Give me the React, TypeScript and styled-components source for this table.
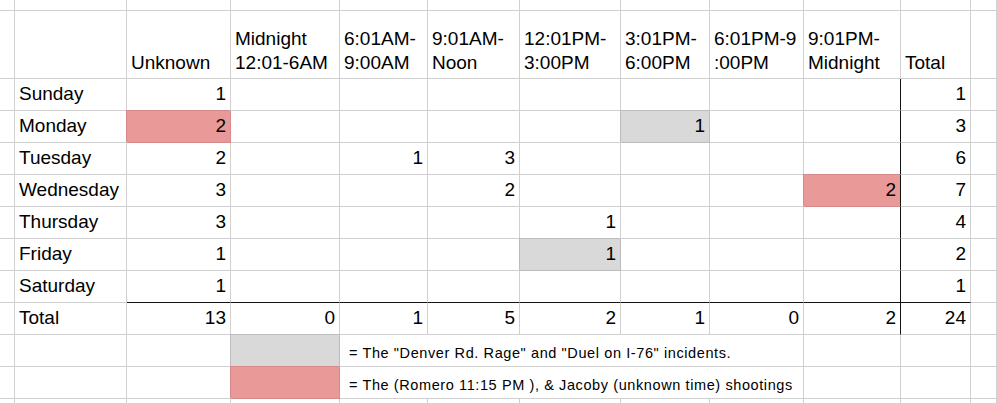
import React from 'react'
import styled, { createGlobalStyle, css } from 'styled-components'

type Fill = 'red' | 'gray'

interface DayRow {
	day: string
	values: (number | null)[]
	total: number
	fills?: Record<number, Fill>
}

const fills = {
	red: { bg: '#ea9999', edge: '#d48a8a' },
	gray: { bg: '#d9d9d9', edge: '#bcbcbc' },
}

const headers = [
	['Unknown'],
	['Midnight', '12:01-6AM'],
	['6:01AM-', '9:00AM'],
	['9:01AM-', 'Noon'],
	['12:01PM-', '3:00PM'],
	['3:01PM-', '6:00PM'],
	['6:01PM-9', ':00PM'],
	['9:01PM-', 'Midnight'],
	['Total'],
]

const rows: DayRow[] = [
	{ day: 'Sunday', values: [1, null, null, null, null, null, null, null], total: 1 },
	{ day: 'Monday', values: [2, null, null, null, null, 1, null, null], total: 3, fills: { 0: 'red', 5: 'gray' } },
	{ day: 'Tuesday', values: [2, null, 1, 3, null, null, null, null], total: 6 },
	{ day: 'Wednesday', values: [3, null, null, 2, null, null, null, 2], total: 7, fills: { 7: 'red' } },
	{ day: 'Thursday', values: [3, null, null, null, 1, null, null, null], total: 4 },
	{ day: 'Friday', values: [1, null, null, null, 1, null, null, null], total: 2, fills: { 4: 'gray' } },
	{ day: 'Saturday', values: [1, null, null, null, null, null, null, null], total: 1 },
]

const totals = [13, 0, 1, 5, 2, 1, 0, 2]

const legend: { fill: Fill; text: string }[] = [
	{ fill: 'gray', text: '= The "Denver Rd. Rage" and "Duel on I-76" incidents.' },
	{ fill: 'red', text: '= The (Romero 11:15 PM ), & Jacoby (unknown time) shootings' },
]

export default function App() {
	return (
		<>
			<GlobalStyle />
			<Sheet>
				{Array.from({ length: 12 }, (_, i) => <Cell key={`top${i}`} />)}

				<Cell />
				<Cell />
				{headers.map((lines, i) => (
					<HeaderCell key={`h${i}`}>
						<span>
							{lines.map((l, j) => (
								<React.Fragment key={j}>
									{j > 0 && <br />}
									{l}
								</React.Fragment>
							))}
						</span>
					</HeaderCell>
				))}
				<Cell />

				{rows.map((row, r) => {
					const last = r === rows.length - 1
					return (
						<React.Fragment key={row.day}>
							<Cell />
							<Cell>{row.day}</Cell>
							{row.values.map((v, c) => (
								<Cell
									key={c}
									$num
									$fill={row.fills?.[c]}
									$bottom={last}
									$right={c === 7}
								>
									{v}
								</Cell>
							))}
							<Cell $num $bottom={last}>{row.total}</Cell>
							<Cell />
						</React.Fragment>
					)
				})}

				<Cell />
				<Cell>Total</Cell>
				{totals.map((t, c) => (
					<Cell key={`t${c}`} $num $right={c === 7}>{t}</Cell>
				))}
				<Cell $num>24</Cell>
				<Cell />

				{legend.map((item) => (
					<React.Fragment key={item.fill}>
						<Cell />
						<Cell />
						<Cell />
						<Cell $fill={item.fill} />
						<LegendText $span={5}>{item.text}</LegendText>
						<Cell />
						<Cell />
						<Cell />
					</React.Fragment>
				))}

				{Array.from({ length: 12 }, (_, i) => <Cell key={`end${i}`} />)}
			</Sheet>
		</>
	)
}

const GlobalStyle = createGlobalStyle`
	html, body {
		margin: 0;
		padding: 0;
		background: #fff;
	}
	body {
		font-family: "Liberation Sans", Arial, sans-serif;
		color: #000;
	}
`

const Sheet = styled.div`
	display: grid;
	grid-template-columns: 15px 112px 104px 109px 88px 92px 101px 89px 94px 97px 70px 1fr;
	grid-template-rows: 11px 68px repeat(10, 32px) 1fr;
	width: 997px;
	height: 403px;
	overflow: hidden;
	font-size: 19px;
`

const Cell = styled.div<{ $num?: boolean; $fill?: Fill; $right?: boolean; $bottom?: boolean; $span?: number }>`
	box-sizing: border-box;
	display: flex;
	align-items: flex-end;
	justify-content: ${(p) => (p.$num ? 'flex-end' : 'flex-start')};
	padding: 0 4px 5px 4px;
	min-width: 0;
	overflow: visible;
	white-space: nowrap;
	line-height: 1.15;
	border-right: 1px solid ${(p) => (p.$right ? '#111' : '#d0d0d0')};
	border-bottom: 1px solid ${(p) => (p.$bottom ? '#111' : '#d0d0d0')};
	${(p) => p.$span && css`grid-column: span ${p.$span};`}
	${(p) =>
		p.$fill &&
		css`
			background: ${fills[p.$fill].bg};
			box-shadow: -1px -1px 0 0 ${fills[p.$fill].edge};
			${!p.$right && `border-right-color: ${fills[p.$fill].edge};`}
			${!p.$bottom && `border-bottom-color: ${fills[p.$fill].edge};`}
		`}
`

const HeaderCell = styled(Cell)`
	line-height: 23.5px;
	padding-bottom: 4px;
`

const LegendText = styled(Cell)`
	font-size: 14.5px;
	letter-spacing: 0.6px;
	padding-left: 9px;
	padding-bottom: 4px;
`
